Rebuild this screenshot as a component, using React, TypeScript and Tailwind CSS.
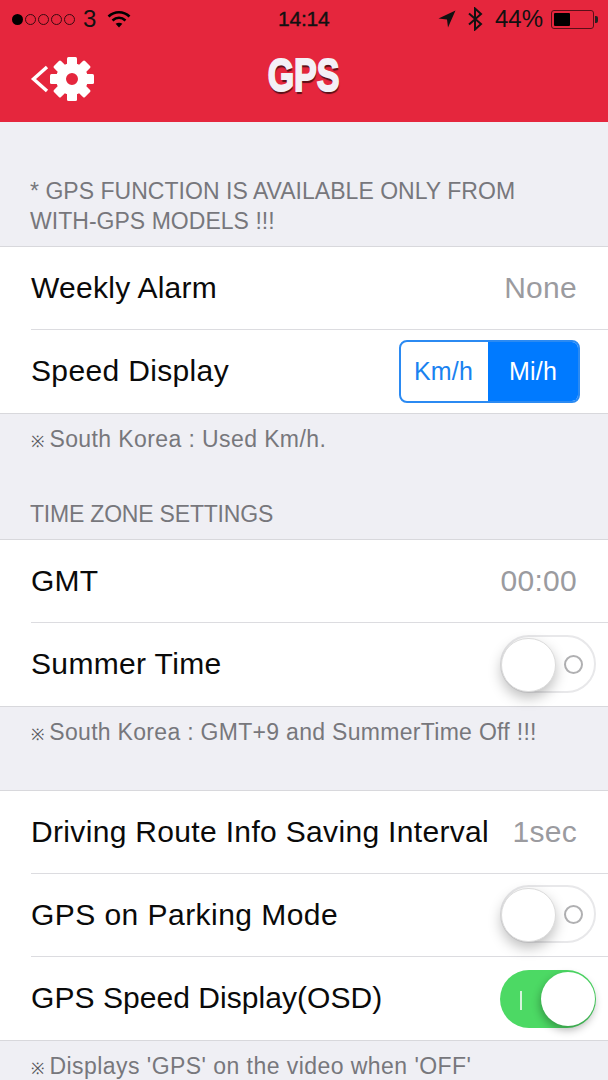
import { type ReactNode } from 'react';

function Gear() {
  const teeth = [0, 45, 90, 135, 180, 225, 270, 315];
  return (
    <svg width="46" height="46" viewBox="0 0 46 46" className="-ml-[1px]">
      <g fill="#fff">
        {teeth.map((a) => (
          <rect key={a} x="18" y="1" width="10" height="12" rx="1.5" transform={`rotate(${a} 23 23)`} />
        ))}
      </g>
      <circle cx="23" cy="23" r="11" fill="none" stroke="#fff" strokeWidth="10" />
    </svg>
  );
}

function StatusBar() {
  return (
    <div className="h-[38px] flex items-center justify-between pl-[12px] pr-[10px] text-[#111] relative">
      <div className="flex items-center">
        <div className="flex items-center gap-[2px]">
          <span className="w-[11px] h-[11px] rounded-full bg-black" />
          {[0, 1, 2, 3].map((i) => (
            <span key={i} className="w-[11px] h-[11px] rounded-full border border-[#3a0a10]" />
          ))}
        </div>
        <span className="ml-[8px] text-[24px] leading-none">3</span>
        <svg width="24" height="18" viewBox="0 0 24 18" className="ml-[11px]" fill="none" stroke="#000">
          <path d="M1.5 6.5 C7.5 0.8 16.5 0.8 22.5 6.5" strokeWidth="2.6" />
          <path d="M5.5 10.5 C9.5 7 14.5 7 18.5 10.5" strokeWidth="2.6" />
          <path d="M12 17.5 L8.6 13.8 C10.6 12.4 13.4 12.4 15.4 13.8 Z" fill="#000" stroke="none" />
        </svg>
      </div>
      <div className="absolute left-[278px] top-[6px] text-[21px] leading-[26px] tracking-[-0.2px] [-webkit-text-stroke:0.4px_#111]">14:14</div>
      <div className="flex items-center">
        <svg width="18" height="18" viewBox="0 0 18 18">
          <path d="M17.5 0.5 L0.5 8.5 L9 9.5 L10 17.5 Z" fill="#111" />
        </svg>
        <svg width="16" height="24" viewBox="0 0 16 24" className="ml-[11px]" fill="none" stroke="#111" strokeWidth="2">
          <path d="M2 6.5 L14 17 L8 22.5 V1.5 L14 7 L2 17.5" />
        </svg>
        <span className="ml-[12px] text-[24px] leading-none">44%</span>
        <div className="ml-[8px] w-[43px] h-[19px] rounded-[3px] border border-[#5a0f18] p-[2px] flex">
          <div className="w-[16px] bg-black rounded-[1px]" />
        </div>
        <div className="ml-[1px] w-[3px] h-[7px] bg-[#222] rounded-r-[2px]" />
      </div>
    </div>
  );
}

function Header() {
  return (
    <div className="h-[122px] bg-[#e5263d]">
      <StatusBar />
      <div className="h-[84px] relative flex items-center justify-center">
        <div className="absolute left-[30px] top-[18px] flex items-center">
          <svg width="20" height="32" viewBox="0 0 20 32" fill="none" stroke="#fff" strokeWidth="3.4">
            <path d="M17 4 L3.5 16 L17 28" />
          </svg>
          <Gear />
        </div>
        <span
          className="mt-[-11px] text-[46px] leading-none font-bold text-[#f4f0f6] scale-x-[0.74] [text-shadow:1px_3px_1px_#5c1018] [-webkit-text-stroke:2px_#f4f0f6]"
          style={{ fontFamily: '"Liberation Sans Narrow", "Liberation Sans", sans-serif' }}
        >
          GPS
        </span>
      </div>
    </div>
  );
}

function Row({ label, last, labelClass, children }: { label: string; last?: boolean; labelClass?: string; children?: ReactNode }) {
  return (
    <div className="pl-[31px]">
      <div className={`h-[83px] flex items-center justify-between text-[30px] text-[#0a0a0a] ${last ? '' : 'border-b border-[#dcdce0]'}`}>
        <span className={`pb-[2px] ${labelClass ?? 'tracking-[0.27px]'}`}>{label}</span>
        {children}
      </div>
    </div>
  );
}

function Value({ children }: { children: ReactNode }) {
  return <span className="pb-[2px] pr-[31px] tracking-[0.27px] text-[#9b9b9f]">{children}</span>;
}

function Group({ children }: { children: ReactNode }) {
  return <div className="bg-white border-y border-[#d8d8dc]">{children}</div>;
}

function Toggle({ on }: { on?: boolean }) {
  if (on) {
    return (
      <div className="mr-[12px] w-[96px] h-[58px] rounded-full bg-[#4cd964] relative">
        <span className="absolute left-[20px] top-[21px] w-[2px] h-[19px] bg-[#d6f5dc]" />
        <span className="absolute right-[1px] top-[2px] w-[54px] h-[54px] rounded-full bg-white shadow-[-1px_4px_8px_rgba(0,0,0,0.3)]" />
      </div>
    );
  }
  return (
    <div className="mr-[12px] mb-[2px] w-[96px] h-[58px] rounded-full border-2 border-[#e8e8ea] bg-white relative">
      <span className="absolute right-[11px] top-[18px] w-[19px] h-[19px] rounded-full border-2 border-[#b0b0b2]" />
      <span className="absolute left-[-1px] top-[1px] w-[55px] h-[54px] rounded-full bg-white border border-[#dcdcdc] shadow-[0_6px_13px_rgba(0,0,0,0.25)]" />
    </div>
  );
}

function Segmented() {
  return (
    <div className="mr-[28px] w-[181px] h-[63px] flex rounded-[8px] border-2 border-[#2b8af2] overflow-hidden text-[25px] tracking-[0.2px]">
      <div className="w-[87px] pr-[2px] flex items-center justify-center text-[#1a82f0]">Km/h</div>
      <div className="flex-1 flex items-center justify-center bg-[#007aff] text-white">Mi/h</div>
    </div>
  );
}

function Mark() {
  return <span className="text-[16px] text-[#55555a] mr-[5px] ml-[1px]">※</span>;
}

export default function App() {
  return (
    <div
      className="w-[608px] h-[1080px] overflow-hidden bg-[#efeff4]"
      style={{ fontFamily: '"Liberation Sans", Arial, sans-serif' }}
    >
      <Header />
      <div className="h-[124px] pt-[54px] pl-[30px] text-[23px] leading-[30px] tracking-[0.03px] text-[#77777c]">
        * GPS FUNCTION IS AVAILABLE ONLY FROM
        <br />
        WITH-GPS MODELS !!!
      </div>
      <Group>
        <Row label="Weekly Alarm">
          <Value>None</Value>
        </Row>
        <Row label="Speed Display" last labelClass="tracking-[0.35px]">
          <Segmented />
        </Row>
      </Group>
      <div className="h-[125px] pt-[11px] pl-[30px] text-[23px] leading-[28px] text-[#77777c]">
        <div className="h-[28px] tracking-[0.4px]"><Mark />South Korea : Used Km/h.</div>
        <div className="mt-[47px] h-[28px] tracking-[-0.2px]">TIME ZONE SETTINGS</div>
      </div>
      <Group>
        <Row label="GMT">
          <Value>00:00</Value>
        </Row>
        <Row label="Summer Time" last labelClass="tracking-[0.35px]">
          <Toggle />
        </Row>
      </Group>
      <div className="h-[83px] pt-[11px] pl-[30px] text-[23px] leading-[28px] tracking-[0.3px] text-[#77777c]">
        <Mark />South Korea : GMT+9 and SummerTime Off !!!
      </div>
      <Group>
        <Row label="Driving Route Info Saving Interval" labelClass="tracking-[0.33px]">
          <Value>1sec</Value>
        </Row>
        <Row label="GPS on Parking Mode" labelClass="tracking-[0.45px]">
          <Toggle />
        </Row>
        <Row label="GPS Speed Display(OSD)" last labelClass="tracking-[0.05px]">
          <Toggle on />
        </Row>
      </Group>
      <div className="pt-[11px] pl-[30px] text-[23px] leading-[28px] tracking-[0.45px] text-[#77777c]">
        <Mark />Displays 'GPS' on the video when 'OFF'
      </div>
    </div>
  );
}
